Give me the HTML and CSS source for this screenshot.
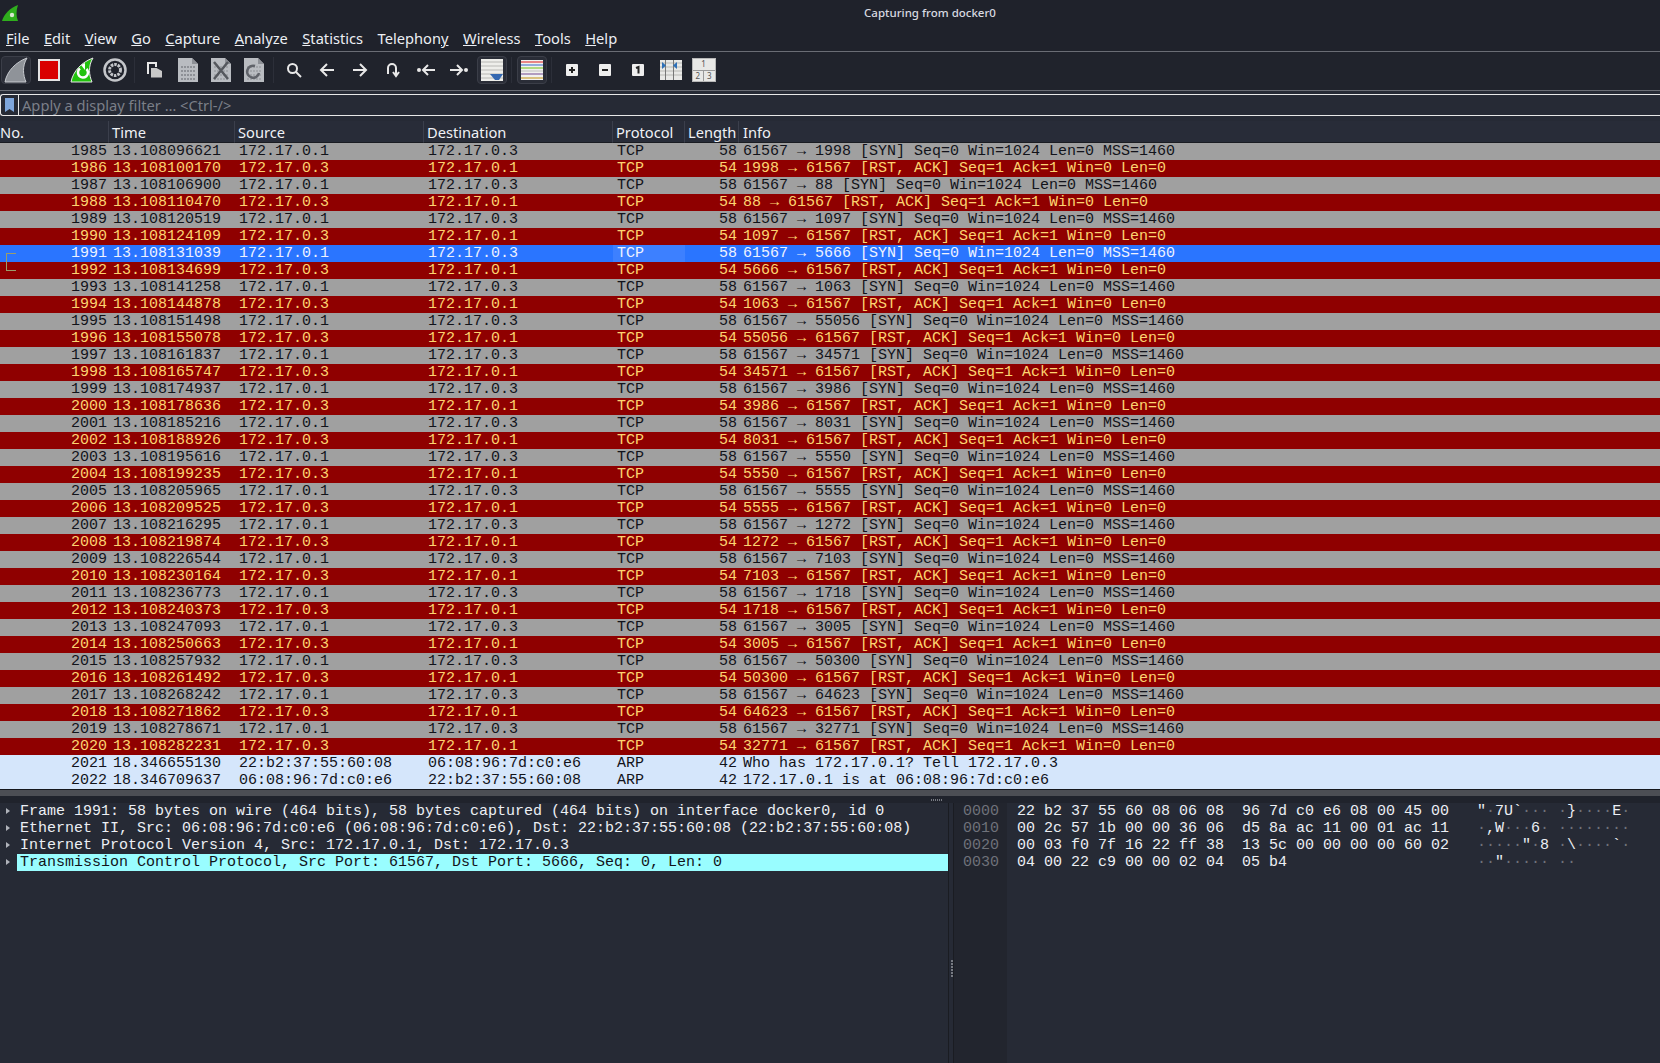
FILE: index.html
```html
<!DOCTYPE html>
<html>
    <head>
        <title>Capturing from docker0</title>
        <link rel="stylesheet" href="styles.css">
    </head>
    <body>
        <div class="titlebar">
            <svg class="app-icon" width="16" height="16" viewBox="0 0 16 16"><path d="M0 16 C2 9 8 3 16 0 C14 6 14 11 16 16 Z" fill="#2fae1d"/><circle cx="10" cy="10" r="2.2" fill="#d8e8d0"/></svg>
            <span class="title-text">Capturing from docker0</span>
        </div>
        <div class="menubar">
            <span><u>F</u>ile</span>
            <span><u>E</u>dit</span>
            <span><u>V</u>iew</span>
            <span><u>G</u>o</span>
            <span><u>C</u>apture</span>
            <span><u>A</u>nalyze</span>
            <span><u>S</u>tatistics</span>
            <span>Telephon<u>y</u></span>
            <span><u>W</u>ireless</span>
            <span><u>T</u>ools</span>
            <span><u>H</u>elp</span>
        </div>
        <div class="toolbar">
            <div class="tool on"><svg width="24" height="26" viewBox="0 0 24 26"><path d="M1 25 C3 14 12 5 23 1 C18 9 19 18 22 25 Z" fill="#8f9399" stroke="#c8cbd0"/></svg></div>
            <div class="tool"><svg width="22" height="22" viewBox="0 0 22 22"><rect x="1" y="1" width="20" height="20" fill="#d90000" stroke="#e4e4e4" stroke-width="2"/></svg></div>
            <div class="tool"><svg width="24" height="26" viewBox="0 0 24 26"><path d="M1 25 C3 14 12 5 23 1 C18 9 19 18 22 25 Z" fill="#22c20e" stroke="#e8e8e8"/><path d="M16.5 12 A5 5 0 1 1 10 11.5" fill="none" stroke="#fff" stroke-width="2.5"/><path d="M11 8 L15 6 L15 13 Z" fill="#fff"/></svg></div>
            <div class="tool"><svg width="24" height="24" viewBox="0 0 24 24"><circle cx="12" cy="12" r="10.5" fill="none" stroke="#c4c6ca" stroke-width="2.5"/><circle cx="12" cy="12" r="5.5" fill="none" stroke="#c4c6ca" stroke-width="3" stroke-dasharray="2.5 1"/></svg></div>
            <div class="sep"></div>
            <div class="tool"><svg width="15" height="16" viewBox="0 0 15 16"><path d="M1 12 V1 H9 V5" fill="none" stroke="#e8e8e8" stroke-width="2"/><path d="M4 6 H9.5 L15 9 V15.5 H4 Z" fill="#c8c8c8"/></svg></div>
            <div class="tool"><svg width="20" height="24" viewBox="0 0 20 24"><path d="M0 0 H14 L20 6 V24 H0 Z" fill="#b9bcc1"/><path d="M14 0 V6 H20 Z" fill="#8d9096"/><path d="M3 9 H17 M3 13 H17 M3 17 H17 M3 21 H17" stroke="#8d9096" stroke-width="2" stroke-dasharray="2 1"/></svg></div>
            <div class="tool"><svg width="20" height="24" viewBox="0 0 20 24"><path d="M0 0 H14 L20 6 V24 H0 Z" fill="#b9bcc1"/><path d="M14 0 V6 H20 Z" fill="#8d9096"/><path d="M3 9 H17 M3 13 H17 M3 17 H17 M3 21 H17" stroke="#a3a6ab" stroke-width="2" stroke-dasharray="2 1"/><path d="M3 4 L17 21 M17 4 L3 21" stroke="#55585e" stroke-width="2.5"/></svg></div>
            <div class="tool"><svg width="20" height="24" viewBox="0 0 20 24"><path d="M0 0 H14 L20 6 V24 H0 Z" fill="#b9bcc1"/><path d="M14 0 V6 H20 Z" fill="#8d9096"/><path d="M3 9 H17 M3 13 H17 M3 17 H17 M3 21 H17" stroke="#a3a6ab" stroke-width="2" stroke-dasharray="2 1"/><path d="M15 15 A6 6 0 1 1 11 8" fill="none" stroke="#60636a" stroke-width="2.5"/></svg></div>
            <div class="sep"></div>
            <div class="tool"><svg width="16" height="16" viewBox="0 0 16 16"><circle cx="6.5" cy="6.5" r="4.5" fill="none" stroke="#e8e8e8" stroke-width="2"/><path d="M10 10 L15 15" stroke="#e8e8e8" stroke-width="2"/></svg></div>
            <div class="tool"><svg width="16" height="16" viewBox="0 0 16 16"><path d="M15 8 H2 M8 2 L2 8 L8 14" fill="none" stroke="#e8e8e8" stroke-width="2"/></svg></div>
            <div class="tool"><svg width="16" height="16" viewBox="0 0 16 16"><path d="M1 8 H14 M8 2 L14 8 L8 14" fill="none" stroke="#e8e8e8" stroke-width="2"/></svg></div>
            <div class="tool"><svg width="14" height="16" viewBox="0 0 14 16"><path d="M2 12 V6 A4 4 0 0 1 10 6 V13 M7 10 L10 14 L13 10" fill="none" stroke="#e8e8e8" stroke-width="2"/></svg></div>
            <div class="tool"><svg width="18" height="16" viewBox="0 0 18 16"><circle cx="2" cy="8" r="2" fill="#e8e8e8"/><path d="M18 8 H6 M11 3 L6 8 L11 13" fill="none" stroke="#e8e8e8" stroke-width="2"/></svg></div>
            <div class="tool"><svg width="18" height="16" viewBox="0 0 18 16"><circle cx="16" cy="8" r="2" fill="#e8e8e8"/><path d="M0 8 H12 M7 3 L12 8 L7 13" fill="none" stroke="#e8e8e8" stroke-width="2"/></svg></div>
            <div class="tool on"><svg width="22" height="22" viewBox="0 0 22 22"><rect width="22" height="22" fill="#eeeeea"/><path d="M0 3 H22 M0 7 H22 M0 11 H22 M0 15 H22 M0 19 H22" stroke="#b8b8b4"/><path d="M9 15 H22 L18 21 H14 Z" fill="#3468b0"/></svg></div>
            <div class="sep"></div>
            <div class="tool on"><svg width="22" height="20" viewBox="0 0 22 20"><rect width="22" height="20" fill="#f2f2f0"/><path d="M0 2 H22" stroke="#e01818"/><path d="M0 5 H22" stroke="#3468c8"/><path d="M0 8 H22" stroke="#70c010"/><path d="M0 11 H22" stroke="#c0c0c0"/><path d="M0 14 H22" stroke="#704890"/><path d="M0 18 H22" stroke="#c09010"/></svg></div>
            <div class="sep"></div>
            <div class="tool"><svg width="12" height="12" viewBox="0 0 12 12"><rect width="12" height="12" rx="1" fill="#eee"/><path d="M3 6 H9 M6 3 V9" stroke="#222" stroke-width="2"/></svg></div>
            <div class="tool"><svg width="12" height="12" viewBox="0 0 12 12"><rect width="12" height="12" rx="1" fill="#eee"/><path d="M3 6 H9" stroke="#222" stroke-width="2"/></svg></div>
            <div class="tool"><svg width="12" height="12" viewBox="0 0 12 12"><rect width="12" height="12" rx="1" fill="#eee"/><path d="M4 4 L6.5 3 V9.5" fill="none" stroke="#222" stroke-width="2"/></svg></div>
            <div class="tool"><svg width="22" height="20" viewBox="0 0 22 20"><rect width="22" height="20" fill="#e8e8e6"/><path d="M0 3 H22 M0 7 H22 M0 11 H22 M0 15 H22" stroke="#b8b8b4"/><path d="M5.5 0 V20 M13.5 0 V20" stroke="#777" stroke-width="1"/><path d="M2 2 L6 5.5 L2 9 Z M17 2 L13 5.5 L17 9 Z" fill="#2e70b8"/></svg></div>
            <div class="tool">
                <div class="layout-icon">
                    <div class="pane-top">1</div>
                    <div class="pane-bottom"><span>2</span><span>3</span></div>
                </div>
            </div>
        </div>
        <div class="filterbar">
            <svg class="bookmark" width="9" height="14" viewBox="0 0 9 14"><path d="M0 0 H9 V14 L4.5 11 L0 14 Z" fill="#7ea6dc"/></svg>
            <span class="filter-hint">Apply a display filter … &lt;Ctrl-/&gt;</span>
        </div>
        <table class="packets">
            <colgroup>
                <col class="c-no"><col class="c-time"><col class="c-src"><col class="c-dst"><col class="c-proto"><col class="c-len"><col>
            </colgroup>
            <thead>
                <tr><th>No.</th><th>Time</th><th>Source</th><th>Destination</th><th>Protocol</th><th>Length</th><th>Info</th></tr>
            </thead>
            <tbody>
                <tr class="syn"><td>1985</td><td>13.108096621</td><td>172.17.0.1</td><td>172.17.0.3</td><td>TCP</td><td>58</td><td>61567 → 1998 [SYN] Seq=0 Win=1024 Len=0 MSS=1460</td></tr>
                <tr class="rst"><td>1986</td><td>13.108100170</td><td>172.17.0.3</td><td>172.17.0.1</td><td>TCP</td><td>54</td><td>1998 → 61567 [RST, ACK] Seq=1 Ack=1 Win=0 Len=0</td></tr>
                <tr class="syn"><td>1987</td><td>13.108106900</td><td>172.17.0.1</td><td>172.17.0.3</td><td>TCP</td><td>58</td><td>61567 → 88 [SYN] Seq=0 Win=1024 Len=0 MSS=1460</td></tr>
                <tr class="rst"><td>1988</td><td>13.108110470</td><td>172.17.0.3</td><td>172.17.0.1</td><td>TCP</td><td>54</td><td>88 → 61567 [RST, ACK] Seq=1 Ack=1 Win=0 Len=0</td></tr>
                <tr class="syn"><td>1989</td><td>13.108120519</td><td>172.17.0.1</td><td>172.17.0.3</td><td>TCP</td><td>58</td><td>61567 → 1097 [SYN] Seq=0 Win=1024 Len=0 MSS=1460</td></tr>
                <tr class="rst"><td>1990</td><td>13.108124109</td><td>172.17.0.3</td><td>172.17.0.1</td><td>TCP</td><td>54</td><td>1097 → 61567 [RST, ACK] Seq=1 Ack=1 Win=0 Len=0</td></tr>
                <tr class="sel"><td><span class="rel-top"></span>1991</td><td>13.108131039</td><td>172.17.0.1</td><td>172.17.0.3</td><td class="sel-proto">TCP</td><td>58</td><td>61567 → 5666 [SYN] Seq=0 Win=1024 Len=0 MSS=1460</td></tr>
                <tr class="rst"><td><span class="rel-bottom"></span>1992</td><td>13.108134699</td><td>172.17.0.3</td><td>172.17.0.1</td><td>TCP</td><td>54</td><td>5666 → 61567 [RST, ACK] Seq=1 Ack=1 Win=0 Len=0</td></tr>
                <tr class="syn"><td>1993</td><td>13.108141258</td><td>172.17.0.1</td><td>172.17.0.3</td><td>TCP</td><td>58</td><td>61567 → 1063 [SYN] Seq=0 Win=1024 Len=0 MSS=1460</td></tr>
                <tr class="rst"><td>1994</td><td>13.108144878</td><td>172.17.0.3</td><td>172.17.0.1</td><td>TCP</td><td>54</td><td>1063 → 61567 [RST, ACK] Seq=1 Ack=1 Win=0 Len=0</td></tr>
                <tr class="syn"><td>1995</td><td>13.108151498</td><td>172.17.0.1</td><td>172.17.0.3</td><td>TCP</td><td>58</td><td>61567 → 55056 [SYN] Seq=0 Win=1024 Len=0 MSS=1460</td></tr>
                <tr class="rst"><td>1996</td><td>13.108155078</td><td>172.17.0.3</td><td>172.17.0.1</td><td>TCP</td><td>54</td><td>55056 → 61567 [RST, ACK] Seq=1 Ack=1 Win=0 Len=0</td></tr>
                <tr class="syn"><td>1997</td><td>13.108161837</td><td>172.17.0.1</td><td>172.17.0.3</td><td>TCP</td><td>58</td><td>61567 → 34571 [SYN] Seq=0 Win=1024 Len=0 MSS=1460</td></tr>
                <tr class="rst"><td>1998</td><td>13.108165747</td><td>172.17.0.3</td><td>172.17.0.1</td><td>TCP</td><td>54</td><td>34571 → 61567 [RST, ACK] Seq=1 Ack=1 Win=0 Len=0</td></tr>
                <tr class="syn"><td>1999</td><td>13.108174937</td><td>172.17.0.1</td><td>172.17.0.3</td><td>TCP</td><td>58</td><td>61567 → 3986 [SYN] Seq=0 Win=1024 Len=0 MSS=1460</td></tr>
                <tr class="rst"><td>2000</td><td>13.108178636</td><td>172.17.0.3</td><td>172.17.0.1</td><td>TCP</td><td>54</td><td>3986 → 61567 [RST, ACK] Seq=1 Ack=1 Win=0 Len=0</td></tr>
                <tr class="syn"><td>2001</td><td>13.108185216</td><td>172.17.0.1</td><td>172.17.0.3</td><td>TCP</td><td>58</td><td>61567 → 8031 [SYN] Seq=0 Win=1024 Len=0 MSS=1460</td></tr>
                <tr class="rst"><td>2002</td><td>13.108188926</td><td>172.17.0.3</td><td>172.17.0.1</td><td>TCP</td><td>54</td><td>8031 → 61567 [RST, ACK] Seq=1 Ack=1 Win=0 Len=0</td></tr>
                <tr class="syn"><td>2003</td><td>13.108195616</td><td>172.17.0.1</td><td>172.17.0.3</td><td>TCP</td><td>58</td><td>61567 → 5550 [SYN] Seq=0 Win=1024 Len=0 MSS=1460</td></tr>
                <tr class="rst"><td>2004</td><td>13.108199235</td><td>172.17.0.3</td><td>172.17.0.1</td><td>TCP</td><td>54</td><td>5550 → 61567 [RST, ACK] Seq=1 Ack=1 Win=0 Len=0</td></tr>
                <tr class="syn"><td>2005</td><td>13.108205965</td><td>172.17.0.1</td><td>172.17.0.3</td><td>TCP</td><td>58</td><td>61567 → 5555 [SYN] Seq=0 Win=1024 Len=0 MSS=1460</td></tr>
                <tr class="rst"><td>2006</td><td>13.108209525</td><td>172.17.0.3</td><td>172.17.0.1</td><td>TCP</td><td>54</td><td>5555 → 61567 [RST, ACK] Seq=1 Ack=1 Win=0 Len=0</td></tr>
                <tr class="syn"><td>2007</td><td>13.108216295</td><td>172.17.0.1</td><td>172.17.0.3</td><td>TCP</td><td>58</td><td>61567 → 1272 [SYN] Seq=0 Win=1024 Len=0 MSS=1460</td></tr>
                <tr class="rst"><td>2008</td><td>13.108219874</td><td>172.17.0.3</td><td>172.17.0.1</td><td>TCP</td><td>54</td><td>1272 → 61567 [RST, ACK] Seq=1 Ack=1 Win=0 Len=0</td></tr>
                <tr class="syn"><td>2009</td><td>13.108226544</td><td>172.17.0.1</td><td>172.17.0.3</td><td>TCP</td><td>58</td><td>61567 → 7103 [SYN] Seq=0 Win=1024 Len=0 MSS=1460</td></tr>
                <tr class="rst"><td>2010</td><td>13.108230164</td><td>172.17.0.3</td><td>172.17.0.1</td><td>TCP</td><td>54</td><td>7103 → 61567 [RST, ACK] Seq=1 Ack=1 Win=0 Len=0</td></tr>
                <tr class="syn"><td>2011</td><td>13.108236773</td><td>172.17.0.1</td><td>172.17.0.3</td><td>TCP</td><td>58</td><td>61567 → 1718 [SYN] Seq=0 Win=1024 Len=0 MSS=1460</td></tr>
                <tr class="rst"><td>2012</td><td>13.108240373</td><td>172.17.0.3</td><td>172.17.0.1</td><td>TCP</td><td>54</td><td>1718 → 61567 [RST, ACK] Seq=1 Ack=1 Win=0 Len=0</td></tr>
                <tr class="syn"><td>2013</td><td>13.108247093</td><td>172.17.0.1</td><td>172.17.0.3</td><td>TCP</td><td>58</td><td>61567 → 3005 [SYN] Seq=0 Win=1024 Len=0 MSS=1460</td></tr>
                <tr class="rst"><td>2014</td><td>13.108250663</td><td>172.17.0.3</td><td>172.17.0.1</td><td>TCP</td><td>54</td><td>3005 → 61567 [RST, ACK] Seq=1 Ack=1 Win=0 Len=0</td></tr>
                <tr class="syn"><td>2015</td><td>13.108257932</td><td>172.17.0.1</td><td>172.17.0.3</td><td>TCP</td><td>58</td><td>61567 → 50300 [SYN] Seq=0 Win=1024 Len=0 MSS=1460</td></tr>
                <tr class="rst"><td>2016</td><td>13.108261492</td><td>172.17.0.3</td><td>172.17.0.1</td><td>TCP</td><td>54</td><td>50300 → 61567 [RST, ACK] Seq=1 Ack=1 Win=0 Len=0</td></tr>
                <tr class="syn"><td>2017</td><td>13.108268242</td><td>172.17.0.1</td><td>172.17.0.3</td><td>TCP</td><td>58</td><td>61567 → 64623 [SYN] Seq=0 Win=1024 Len=0 MSS=1460</td></tr>
                <tr class="rst"><td>2018</td><td>13.108271862</td><td>172.17.0.3</td><td>172.17.0.1</td><td>TCP</td><td>54</td><td>64623 → 61567 [RST, ACK] Seq=1 Ack=1 Win=0 Len=0</td></tr>
                <tr class="syn"><td>2019</td><td>13.108278671</td><td>172.17.0.1</td><td>172.17.0.3</td><td>TCP</td><td>58</td><td>61567 → 32771 [SYN] Seq=0 Win=1024 Len=0 MSS=1460</td></tr>
                <tr class="rst"><td>2020</td><td>13.108282231</td><td>172.17.0.3</td><td>172.17.0.1</td><td>TCP</td><td>54</td><td>32771 → 61567 [RST, ACK] Seq=1 Ack=1 Win=0 Len=0</td></tr>
                <tr class="arp"><td>2021</td><td>18.346655130</td><td>22:b2:37:55:60:08</td><td>06:08:96:7d:c0:e6</td><td>ARP</td><td>42</td><td>Who has 172.17.0.1? Tell 172.17.0.3</td></tr>
                <tr class="arp"><td>2022</td><td>18.346709637</td><td>06:08:96:7d:c0:e6</td><td>22:b2:37:55:60:08</td><td>ARP</td><td>42</td><td>172.17.0.1 is at 06:08:96:7d:c0:e6</td></tr>
            </tbody>
        </table>
        <div class="splitter-h"></div>
        <div class="panes">
            <div class="details">
                <div class="tree-row"><span class="arrow"></span><span class="tree-text">Frame 1991: 58 bytes on wire (464 bits), 58 bytes captured (464 bits) on interface docker0, id 0</span></div>
                <div class="tree-row"><span class="arrow"></span><span class="tree-text">Ethernet II, Src: 06:08:96:7d:c0:e6 (06:08:96:7d:c0:e6), Dst: 22:b2:37:55:60:08 (22:b2:37:55:60:08)</span></div>
                <div class="tree-row"><span class="arrow"></span><span class="tree-text">Internet Protocol Version 4, Src: 172.17.0.1, Dst: 172.17.0.3</span></div>
                <div class="tree-row picked"><span class="arrow"></span><span class="tree-text">Transmission Control Protocol, Src Port: 61567, Dst Port: 5666, Seq: 0, Len: 0</span></div>
            </div>
            <div class="splitter-v"></div>
            <div class="offsets">
                <div>0000</div>
                <div>0010</div>
                <div>0020</div>
                <div>0030</div>
            </div>
            <div class="hex">
                <div>22 b2 37 55 60 08 06 08  96 7d c0 e6 08 00 45 00</div>
                <div>00 2c 57 1b 00 00 36 06  d5 8a ac 11 00 01 ac 11</div>
                <div>00 03 f0 7f 16 22 ff 38  13 5c 00 00 00 00 60 02</div>
                <div>04 00 22 c9 00 00 02 04  05 b4</div>
            </div>
            <div class="ascii">
                <div>"<i>·</i>7U`<i>···</i> <i>·</i>}<i>····</i>E<i>·</i></div>
                <div><i>·</i>,W<i>···</i>6<i>·</i> <i>········</i></div>
                <div><i>·····</i>"<i>·</i>8 <i>·</i>\<i>····</i>`<i>·</i></div>
                <div><i>··</i>"<i>·····</i> <i>··</i></div>
            </div>
        </div>
    </body>
</html>
```

FILE: styles.css
```css
html, body {
    margin: 0;
    height: 100%;
}

body {
    display: flex;
    flex-direction: column;
    height: 1063px;
    overflow: hidden;
    background-color: #262a35;
    color: #eceff4;
    font-family: "Noto Sans", sans-serif;
    font-size: 14.67px;
}

.titlebar {
    position: relative;
    height: 26px;
    display: flex;
    align-items: flex-start;
    padding: 5px 0 0 2px;
    box-sizing: border-box;
    background-color: #1f222b;
    flex: none;
}

.title-text {
    position: absolute;
    left: 200px;
    right: 0;
    top: 5px;
    text-align: center;
    font-size: 11.5px;
    font-weight: 500;
    color: #d8dae0;
}

.menubar {
    height: 26px;
    display: flex;
    align-items: center;
    gap: 14.5px;
    padding: 0 0 1px 6px;
    box-sizing: border-box;
    background-color: #1f222b;
    border-bottom: 1px solid #6a6d75;
    flex: none;
}

.toolbar {
    height: 39px;
    display: flex;
    align-items: center;
    padding-bottom: 2px;
    box-sizing: border-box;
    background-color: #20232c;
    border-bottom: 1px solid #6a6d75;
    flex: none;
}

.tool {
    width: 33px;
    height: 28px;
    display: flex;
    align-items: center;
    justify-content: center;
    box-sizing: border-box;
    flex: none;
}

.tool.on {
    width: 30px;
    margin: 0 1.5px;
    background-color: #2a2d37;
    border: 1px solid #3b3e48;
    border-radius: 4px;
}

.tool.on:first-child {
    margin-left: 0.5px;
}

.sep {
    width: 1px;
    height: 26px;
    margin: 0 3px;
    background-color: #2c2f39;
    flex: none;
}

.layout-icon {
    width: 24px;
    height: 24px;
    border: 1px solid #b8b8b8;
    box-sizing: border-box;
    background-color: #e8e8e6;
    color: #555;
    font-size: 8px;
    line-height: 10px;
    text-align: center;
}

.pane-top {
    height: 11px;
    border-bottom: 1px solid #999;
}

.pane-bottom {
    display: flex;
}

.pane-bottom span {
    flex: 1;
}

.pane-bottom span + span {
    border-left: 1px solid #999;
}

.filterbar {
    height: 22px;
    margin-top: 3px;
    display: flex;
    align-items: center;
    box-sizing: border-box;
    border-top: 1px solid #e8e8e8;
    border-bottom: 1px solid #e8e8e8;
    border-left: 1px solid #e8e8e8;
    border-radius: 3px 0 0 3px;
    background-color: #262a35;
    flex: none;
}

.bookmark {
    margin-left: 4px;
    padding-right: 4px;
    border-right: 1px solid #e8e8e8;
    height: 20px;
    box-sizing: content-box;
    flex: none;
}

.filter-hint {
    color: #7b7f88;
    margin-left: 3px;
}

.packets {
    width: 100%;
    margin-top: 5px;
    border-collapse: separate;
    border-spacing: 0;
    table-layout: fixed;
    flex: none;
    font-family: "Liberation Mono", monospace;
    font-size: 15px;
}

.c-no { width: 109px; }
.c-time { width: 126px; }
.c-src { width: 189px; }
.c-dst { width: 189px; }
.c-proto { width: 72px; }
.c-len { width: 54px; }

.packets th {
    height: 22px;
    padding: 0 0 0 3px;
    text-align: left;
    font-family: "Noto Sans", sans-serif;
    font-size: 14.67px;
    font-weight: 400;
    color: #f0f2f6;
    background-color: #282c38;
    border-right: 1px solid #3b3f4c;
    border-bottom: 1px solid #1a1c22;
    box-sizing: border-box;
    white-space: nowrap;
}

.packets th:first-child {
    padding-left: 0;
}

.packets th:last-child {
    padding-left: 4px;
    border-right: 0;
}

.packets td {
    position: relative;
    height: 17px;
    padding: 0 0 0 4px;
    line-height: 17px;
    white-space: pre;
    overflow: hidden;
}

.packets td:first-child,
.packets td:nth-child(6) {
    padding: 0 2px 0 0;
    text-align: right;
}

.syn { background-color: #a0a0a0; color: #12131a; }
.rst { background-color: #8f0000; color: #fdd470; }
.sel { background-color: #2a75ff; color: #eef2ff; }
.arp { background-color: #d5e6fb; color: #12131a; }

.packets td.sel-proto {
    background-color: #3d80ff;
}

/* related packet bracket in the No. column */
.rel-top,
.rel-bottom {
    position: absolute;
    left: 6px;
    width: 9px;
    border-left: 1px solid #9c9c6a;
}

.rel-top {
    top: 8px;
    height: 9px;
    border-top: 1px solid #9c9c6a;
}

.rel-bottom {
    top: 0;
    height: 8px;
    border-bottom: 1px solid #9c9c6a;
}

.splitter-h {
    position: relative;
    height: 14px;
    box-sizing: border-box;
    border-top: 1px solid #15171c;
    border-bottom: 7px solid #20232c;
    background-color: #4c4e54;
    flex: none;
}

.splitter-h::after {
    content: "";
    position: absolute;
    left: 931px;
    top: 9px;
    width: 11px;
    height: 2px;
    background: repeating-linear-gradient(90deg, #777a82 0 1px, transparent 1px 2px);
}

.panes {
    flex: 1;
    display: flex;
    font-family: "Liberation Mono", monospace;
    font-size: 15px;
    line-height: 17px;
}

.details {
    width: 948px;
    flex: none;
    overflow: hidden;
}

.tree-row {
    position: relative;
    height: 17px;
}

.tree-text {
    display: block;
    margin-left: 17px;
    padding-left: 3px;
    white-space: pre;
}

.picked .tree-text {
    background-color: #99fdff;
    color: #12131a;
}

.arrow {
    position: absolute;
    left: 6px;
    top: 5px;
    border-left: 4px solid #b0b3ba;
    border-top: 3.5px solid transparent;
    border-bottom: 3.5px solid transparent;
}

.splitter-v {
    position: relative;
    width: 6px;
    flex: none;
    box-sizing: border-box;
    background-color: #262a35;
    border-left: 1px solid #1a1c22;
    border-right: 1px solid #1a1c22;
}

.splitter-v::after {
    content: "";
    position: absolute;
    left: 2px;
    top: 157px;
    width: 2px;
    height: 18px;
    background: repeating-linear-gradient(180deg, #777a82 0 2px, transparent 2px 3px);
}

.offsets {
    width: 53px;
    padding-left: 9px;
    box-sizing: border-box;
    flex: none;
    color: #6f727a;
    background-color: #22252e;
}

.hex {
    width: 470px;
    padding-left: 10px;
    box-sizing: border-box;
    flex: none;
}

.hex div,
.ascii div {
    white-space: pre;
}

.ascii i {
    font-style: normal;
    color: #6f727a;
}
```
